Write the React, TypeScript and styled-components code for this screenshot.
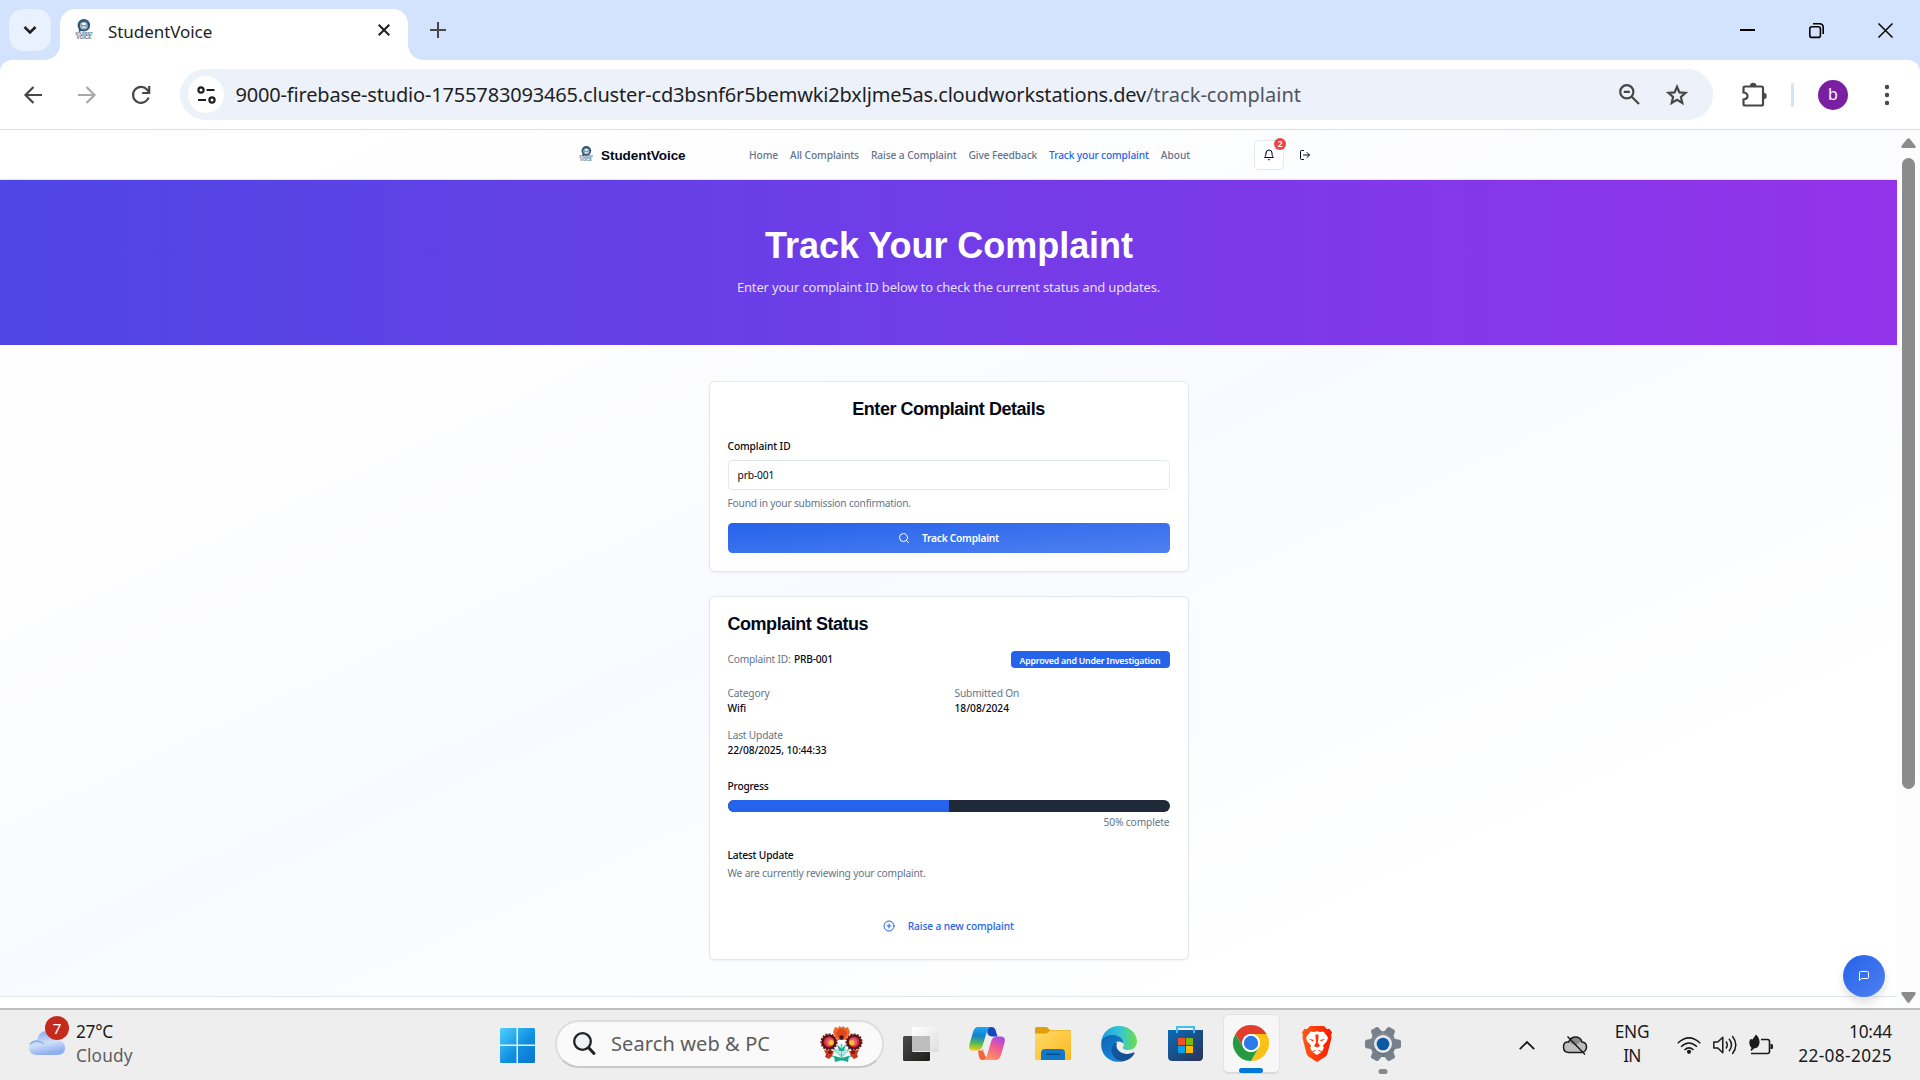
import React from 'react';
import styled, { createGlobalStyle, css } from 'styled-components';
import { LogOut, Search, CirclePlus } from 'lucide-react';

const ui = `"Noto Sans", "Open Sans", sans-serif`;
const heading = `"Liberation Sans", Arial, sans-serif`;
const c = {
  strip: '#d3e2fd', ink: '#020817', muted: '#64748b', line: '#e2e8f0',
  blue: '#2563eb', chrome: '#474747', text: '#1f1f1f',
};

const Global = createGlobalStyle`
  * { box-sizing: border-box; }
  html, body { margin: 0; padding: 0; overflow: hidden; }
  body { font-family: ${ui}; color: ${c.ink}; }
  svg { display: block; flex: none; overflow: visible; }
  p, h1, h2 { margin: 0; }
`;

const Screen = styled.div`
  width: 1920px; height: 1080px; display: flex; flex-direction: column; overflow: hidden; background: #fff;
`;
const spacing = css<{ $ls?: number }>`letter-spacing: ${p => p.$ls ?? 0}px;`;

/* ---- browser frame ---- */
const TabStrip = styled.div`
  height: 60px; flex: none; display: flex; background: ${c.strip}; padding: 9px 0 0 9px;
`;
const TabSearch = styled.div`
  width: 42px; height: 42px; border-radius: 14px; background: #e9f0fe; display: grid; place-items: center;
`;
const Tab = styled.div`
  position: relative; width: 348px; height: 51px; margin-left: 9px; padding: 0 18px 9px 15px;
  border-radius: 15px 15px 0 0; background: #fff; display: flex; align-items: center;
  &::before, &::after { content: ''; position: absolute; bottom: 0; width: 15px; height: 15px; }
  &::before { left: -15px; background: radial-gradient(circle at 0 0, transparent 14.5px, #fff 15px); }
  &::after { right: -15px; background: radial-gradient(circle at 100% 0, transparent 14.5px, #fff 15px); }
`;
const TabTitle = styled.span`
  ${spacing} font-size: 17px; line-height: 24px; color: ${c.text}; padding: 3px 0 0 15px; flex: 1;
`;
const NewTab = styled.div`width: 18px; height: 42px; margin-left: 21px; display: grid; place-items: center;`;
const WindowButtons = styled.div`
  margin-left: auto; display: grid; grid-template-columns: repeat(3, 69px); height: 42px; place-items: center;
`;
const ToolbarBack = styled.div`background: ${c.strip}; flex: none;`;
const Toolbar = styled.div`
  height: 70px; display: flex; align-items: center; background: #fff; border-radius: 12px 12px 0 0;
  border-bottom: 1px solid #dedede; padding: 0 6px;
`;
const ToolCell = styled.div<{ $w?: number; $ml?: number }>`
  width: ${p => p.$w ?? 54}px; margin-left: ${p => p.$ml ?? 0}px; height: 50px; display: grid; place-items: center; flex: none;
`;
const Omnibox = styled.div`
  width: 1533px; height: 51px; margin-left: 12px; border-radius: 26px; background: #ecf1fa;
  display: flex; align-items: center; padding: 0 12px 0 8px;
`;
const SiteInfo = styled.div`
  width: 36px; height: 37px; border-radius: 19px; background: #fff; display: grid; place-items: center;
`;
const Url = styled.div`
  flex: 1; margin-left: 11.500px; font-size: 20px; line-height: 30px; white-space: nowrap; color: ${c.text};
`;
const Host = styled.span`${spacing}`;
const Path = styled.span`${spacing} color: #51545a;`;
const Divider = styled.div`width: 3px; height: 24px; border-radius: 2px; margin-left: 10px; background: ${c.strip};`;
const Avatar = styled.div`
  width: 30px; height: 30px; border-radius: 50%; margin-left: 24px; background: #7b1fa2; color: #fff;
  font-size: 16px; line-height: 29px; text-align: center;
`;

/* ---- web page ---- */
const Viewport = styled.div`height: 878px; flex: none; display: flex;`;
const Page = styled.div`
  width: 1897px; display: flex; flex-direction: column;
  background: linear-gradient(to bottom right, #fff 0%, #fefeff 25%, #f8faff 48%, #fff 82%);
`;
const Header = styled.header`
  height: 50px; flex: none; border-bottom: 1px solid ${c.line}; display: flex; align-items: center; padding-left: 579px;
  background: rgba(255, 255, 255, 0.4);
`;
const Brand = styled.span`
  ${spacing} font: bold 13.5px/20px ${heading}; width: 148px; padding: 2px 0 0 8px; flex: none;
`;
const Nav = styled.nav`display: flex; gap: 12px; margin-left: 8px; padding-top: 2px; width: 505px; flex: none; white-space: nowrap;`;
const NavLink = styled.a<{ $active?: boolean; $ls?: number }>`
  ${spacing} font-size: 10.2px; font-weight: 500; line-height: 15px; color: ${p => (p.$active ? c.blue : c.muted)};
`;
const BellButton = styled.div`
  position: relative; width: 30px; height: 30px; border: 1px solid ${c.line}; border-radius: 4.5px;
  background: #fff; display: grid; place-items: center; flex: none;
`;
const Count = styled.span`
  position: absolute; top: -3px; right: -3px; width: 12px; height: 12px; border-radius: 50%;
  background: #ef4444; color: #fff; font-size: 9px; font-weight: 600; line-height: 12px; text-align: center;
`;
const LogoutButton = styled.div`width: 42px; height: 30px; display: grid; place-items: center;`;

const Hero = styled.section`
  height: 165px; flex: none; padding-top: 43px; text-align: center; color: #fff;
  background: linear-gradient(to right, #4f46e5, #9333ea);
`;
const HeroTitle = styled.h1`${spacing} font: bold 36px/45px ${heading}; padding-left: 1px;`;
const HeroText = styled.p`${spacing} margin-top: 9px; font-size: 13px; line-height: 21px; color: rgba(255, 255, 255, 0.85);`;

const Main = styled.main`display: flex; flex-direction: column; gap: 24px; align-items: center; padding: 36px 0; flex: none;`;
const Card = styled.section`
  width: 480px; border: 1px solid ${c.line}; border-radius: 6px; background: #fff; padding: 15px 18px 18px;
  box-shadow: 0 1px 2px rgba(0, 0, 0, 0.05); display: flex; flex-direction: column;
`;
const CardTitle = styled.h2<{ $center?: boolean; $ls?: number }>`
  ${spacing} font: bold 18px/24px ${heading}; text-align: ${p => (p.$center ? 'center' : 'left')};
`;
const Line = styled.p<{ $muted?: boolean; $mt?: number; $right?: boolean; $ls?: number }>`
  ${spacing} font-size: 10.2px; line-height: 15px; margin-top: ${p => p.$mt ?? 0}px;
  font-weight: ${p => (p.$muted ? 400 : 500)}; color: ${p => (p.$muted ? c.muted : c.ink)};
  text-align: ${p => (p.$right ? 'right' : 'left')};
`;
const Input = styled.div`
  ${spacing} height: 30px; margin-top: 6px; border: 1px solid ${c.line}; border-radius: 4.5px; padding: 0 9px;
  font-size: 10.2px; line-height: 29px;
`;
const Submit = styled.div`
  ${spacing} height: 30px; margin-top: 12px; border-radius: 4.5px; display: flex; align-items: center; justify-content: center;
  gap: 12px; color: #fff; font-size: 10.2px; font-weight: 600; background: linear-gradient(to bottom right, ${c.blue}, #4f80f0);
`;
const IdRow = styled.div`display: flex; justify-content: space-between; align-items: center; height: 17px; margin-top: 15px;`;
const IdValue = styled.span`${spacing} color: ${c.ink}; font-weight: 500; margin-left: 1px;`;
const Badge = styled.span`
  ${spacing} width: 159px; height: 17px; border-radius: 4px; background: ${c.blue}; color: #fff; font-size: 8.75px; font-weight: 600;
  line-height: 20px; text-align: center; white-space: nowrap;
`;
const Facts = styled.div`display: grid; grid-template-columns: 1fr 1fr; gap: 12px; margin: 18px 0 21px;`;
const ProgressTrack = styled.div`height: 12px; margin: 6px 0 3px; border-radius: 6px; overflow: hidden; background: #1f2937;`;
const ProgressFill = styled.div`width: 50%; height: 100%; background: ${c.blue};`;
const LinkButton = styled.div`
  ${spacing} height: 30px; margin-top: 30px; display: flex; align-items: center; justify-content: center; gap: 12.5px;
  color: ${c.blue}; font-size: 10.2px; font-weight: 500;
`;
const Footer = styled.footer`border-top: 1px solid ${c.line}; flex: 1; background: #fff;`;
const ChatButton = styled.div`
  position: absolute; left: 1843px; top: 955px; width: 42px; height: 42px; border-radius: 50%; display: grid; place-items: center;
  background: linear-gradient(to bottom right, ${c.blue}, #4f80f0); box-shadow: 0 6px 10px rgba(0, 0, 0, 0.12);
`;
const ScrollBar = styled.div`
  width: 23px; background: #fcfcfc; display: flex; flex-direction: column; align-items: center; padding: 8px 0 5px;
`;
const Thumb = styled.div`width: 13px; height: 631px; margin-top: 10px; border-radius: 7px; background: #8b8b8b;`;
const Grow = styled.div`flex: 1;`;

/* ---- task bar ---- */
const Taskbar = styled.div`
  flex: 1; border-top: 2px solid #bfbfbf; background: #eeeeee; display: flex; align-items: center; color: #1b1b1b;
`;
const Weather = styled.div`width: 500px; display: flex; padding-left: 29px; gap: 11px; flex: none;`;
const WeatherIcon = styled.div`position: relative; width: 36px; height: 46px; display: flex; align-items: center;`;
const Alert = styled.span`
  position: absolute; left: 16px; top: -4px; width: 24px; height: 24px; border-radius: 50%; background: #c42b1c; color: #fff;
  font-size: 15px; line-height: 24px; text-align: center;
`;
const Stack = styled.div<{ $align?: string }>`
  display: flex; flex-direction: column; align-items: ${p => p.$align ?? 'flex-start'}; padding-bottom: 2px;
`;
const SysText = styled.span<{ $dim?: boolean; $ls?: number }>`
  ${spacing} font-size: 17.3px; line-height: 24px; color: ${p => (p.$dim ? '#5f5f5f' : '#1b1b1b')};
`;
const SearchBox = styled.div`
  width: 329px; height: 48px; margin: -3px 4px 0 20px; border: 2px solid #dedede; border-bottom-color: #c8c8c8; border-radius: 24px;
  background: #fafafa; display: flex; align-items: center; padding: 0 19px 0 16px; flex: none;
`;
const SearchText = styled.span`${spacing} font-size: 20px; line-height: 28px; color: #5d5d5d; padding: 1px 0 0 16px; flex: 1;`;
const AppSlot = styled.div`width: 66px; height: 70px; display: grid; place-items: center; flex: none;`;
const AppTile = styled.div<{ $active?: boolean }>`
  position: relative; width: 57px; height: 60px; border-radius: 6px; display: grid; place-items: center; margin-top: -3px;
  ${p => p.$active && css`background: #f7f7f7; border: 1px solid #e3e3e3; border-bottom: 2px solid #dadada;`}
`;
const Running = styled.span<{ $wide?: boolean }>`
  position: absolute; bottom: ${p => (p.$wide ? -1 : 0)}px; left: 50%; transform: translateX(-50%); height: 5px; border-radius: 3px;
  width: ${p => (p.$wide ? 24 : 9)}px; background: ${p => (p.$wide ? '#0078d7' : '#8a8a8a')};
`;
const Tray = styled.div`flex: 1; margin-left: 87px; display: flex; align-items: center;`;
const TrayCell = styled.div<{ $w: number; $ml?: number }>`
  width: ${p => p.$w}px; margin-left: ${p => p.$ml ?? 0}px; display: grid; place-items: center; flex: none;
`;
const Clock = styled.div`flex: 1; padding: 0 28px 2px 0; display: flex; flex-direction: column; align-items: flex-end;`;

const Emblem = styled.div<{ $s: number }>`
  width: ${p => p.$s * 18}px; height: ${p => p.$s * 22}px; display: flex; flex-direction: column; align-items: center; color: #2f5673; flex: none;
`;
const EmblemWord = styled.span<{ $s: number }>`
  font: bold ${p => p.$s * 5}px/${p => p.$s * 4.4}px ${heading}; opacity: 0.85;
`;
const Logo = ({ s }: { s: number }) => (
  <Emblem $s={s}>
    <svg width={13.5 * s} height={13.5 * s} viewBox="0 0 13 13">
      <circle cx="6.6" cy="6" r="6" fill="#2f5673" />
      <path d="M2 9 L1.6 12.6 L6 11z" fill="#2f5673" />
      <circle cx="6.6" cy="6.4" r="3.7" fill="#b7c9d6" />
      <path d="M2.6 4.8 L6.6 3 L10.6 4.8 L6.6 6.6z M4.4 6.2v2.1c1.4 1.1 3 1.1 4.4 0V6.2L6.6 7.2z" fill="#fff" stroke="#2f5673" strokeWidth=".5" />
    </svg>
    <EmblemWord $s={s * 0.74}>STUDENT</EmblemWord>
    <EmblemWord $s={s * 0.95}>VOICE</EmblemWord>
  </Emblem>
);

const BellIcon = () => (
  <svg width="12" height="12" viewBox="0 0 24 24" fill="none" stroke={c.ink} strokeWidth="2" strokeLinecap="round" strokeLinejoin="round">
    <path d="M6 8a6 6 0 0 1 12 0c0 7 3 9 3 9H3s3-2 3-9" /><path d="M10.300 21a1.940 1.940 0 0 0 3.400 0" />
  </svg>
);
const MessageIcon = () => (
  <svg width="12" height="12" viewBox="0 0 24 24" fill="none" stroke="#fff" strokeWidth="2" strokeLinecap="round" strokeLinejoin="round">
    <path d="M21 15a2 2 0 0 1-2 2H7l-4 4V5a2 2 0 0 1 2-2h14a2 2 0 0 1 2 2z" />
  </svg>
);

const Flower = () => (
  <svg width="43" height="38" viewBox="0 0 43 38">
    <path d="M21.5 36V19M21 31L12 22M22 31L31 22M21 34L9 30M22 34L34 30" stroke="#5cc9b4" strokeWidth="1.6" fill="none" />
    {[9, 34].map(x => (
      <g key={x}>
        <circle cx={x} cy="17" r="7.6" fill="#4a1218" stroke="#6b1a1d" strokeWidth="2" strokeDasharray="2 1.2" />
        <circle cx={x} cy="17" r="5.4" fill="#d3302b" />
        <circle cx={x + (x < 20 ? 1 : -1)} cy="17" r="4" fill="#e8508a" />
        <circle cx={x + (x < 20 ? 2 : -2)} cy="17.5" r="2.6" fill="#ffc220" />
      </g>
    ))}
    <path d="M13 7 15 2l3 1 1.500-2 2 1.500L23.500 1l1.500 2 3-1 2 5-2 5-3 3h-7l-3-3z" fill="#f0692a" />
    <path d="M16 8l2-3 3.500-1.500L25 5l2 3-2 4h-7z" fill="#dd4a17" />
    <circle cx="21.500" cy="12.500" r="2.200" fill="#4a1218" />
    <path d="M4 25l10 1-2 5-3 3-4-2 1-3zM39 25l-10 1 2 5 3 3 4-2-1-3z" fill="#c8371a" />
    <circle cx="10" cy="27" r="2" fill="#7a1a15" /><circle cx="33" cy="27" r="2" fill="#7a1a15" />
    <path d="M17 19l4.500 5 4.500-5-2 7h-5zM14 31l7.500 2 7.500-2-1 6-6.500-2-6.500 2z" fill="#18a88f" />
    <path d="M14 27l4-4 3 8zM29 27l-4-4-3 8z" fill="#a5e4d8" />
  </svg>
);

const Windows = () => (
  <svg width="35" height="35" viewBox="0 0 35 35">
    <defs><linearGradient id="win" x1="0" y1="0" x2="1" y2="1"><stop offset="0" stopColor="#4fd0ff" /><stop offset=".55" stopColor="#1290e2" /><stop offset="1" stopColor="#0873cf" /></linearGradient></defs>
    <path d="M1.500 0H16.500V16.500H0V1.500Q0 0 1.500 0zM18 0H33.500Q35 0 35 1.500V16.500H18zM0 18H16.500V35H1.500Q0 35 0 33.500zM18 18H35V33.500Q35 35 33.500 35H18z" fill="url(#win)" />
  </svg>
);
const TaskView = () => (
  <svg width="36" height="34" viewBox="0 0 36 34">
    <defs>
      <linearGradient id="tv1" x1="0" y1="0" x2="1" y2="1"><stop stopColor="#4b4a48" /><stop offset="1" stopColor="#1d1d1c" /></linearGradient>
      <linearGradient id="tv2" x1="0" y1="0" x2="1" y2="1"><stop stopColor="#fff" /><stop offset="1" stopColor="#dedede" /></linearGradient>
    </defs>
    <rect y="9" width="27" height="25" rx="1.500" fill="url(#tv1)" />
    <rect x="9" width="27" height="25" rx="1.500" fill="url(#tv2)" />
    <path d="M9 9h18v15H9z" fill="#bdbdbd" />
  </svg>
);
const Copilot = () => (
  <svg width="36" height="33" viewBox="0 0 36 33">
    <defs>
      <linearGradient id="cp1" x1=".3" y1="0" x2=".2" y2="1"><stop stopColor="#1ba7ef" /><stop offset=".35" stopColor="#167fd2" /><stop offset=".65" stopColor="#4cb35d" /><stop offset="1" stopColor="#f3d311" /></linearGradient>
      <linearGradient id="cp2" x1=".8" y1="0" x2=".3" y2="1"><stop stopColor="#a24be8" /><stop offset=".45" stopColor="#ef5a94" /><stop offset="1" stopColor="#ff9a5c" /></linearGradient>
      <linearGradient id="cp3" x1="0" y1="0" x2="1" y2="1"><stop stopColor="#0c4fae" /><stop offset="1" stopColor="#1c3fd0" /></linearGradient>
    </defs>
    <path d="M18 0h4.500q3 0 4 3l2 6.500h-5q-4 0-5-3z" fill="url(#cp3)" />
    <path d="M9 23.500h6l-2-2 5 11.500h-4.500q-2.500 0-3.500-3z" fill="#f4653a" />
    <path d="M9 0H21.500Q19 1 17.800 5L13.500 19Q12 23.500 8 23.500H4Q-1 23.500 .4 17.500L4 5Q5.500 0 9 0z" fill="url(#cp1)" />
    <path d="M27 33H14Q16.800 32 18 28L22.300 14Q23.700 9.500 27.800 9.500H32Q37 9.500 35.600 15.500L32 28Q30.500 33 27 33z" fill="url(#cp2)" />
  </svg>
);
const Folder = () => (
  <svg width="36" height="33" viewBox="0 0 36 33">
    <defs><linearGradient id="fo" x1="0" y1="0" x2="1" y2="1"><stop stopColor="#ffda6b" /><stop offset="1" stopColor="#fcb91c" /></linearGradient></defs>
    <path d="M0 1.500Q0 0 1.500 0H11q1 0 2 1l2 2h19.500q1.500 0 1.500 1.500V10H0z" fill="#dfa00c" />
    <path d="M0 6.500h11q1 0 2-1l2-2h19.500Q36 3.500 36 5V31.500Q36 33 34.500 33H1.500Q0 33 0 31.500z" fill="url(#fo)" />
    <path d="M6 33v-7q0-4 4-4h16q4 0 4 4v7z" fill="#1377c9" /><path d="M11 27.300h14" stroke="#0a4d8b" strokeWidth="1.600" />
  </svg>
);
const Edge = () => (
  <svg width="36" height="36" viewBox="0 0 36 36">
    <defs>
      <linearGradient id="ed1" x1="0" y1=".5" x2="1" y2=".5"><stop stopColor="#1c9de0" /><stop offset=".5" stopColor="#35c3d8" /><stop offset="1" stopColor="#6be04b" /></linearGradient>
      <linearGradient id="ed2" x1="0" y1="0" x2=".6" y2="1"><stop stopColor="#0f62b0" /><stop offset="1" stopColor="#1689dc" /></linearGradient>
      <linearGradient id="ed3" x1="0" y1="0" x2="1" y2="1"><stop stopColor="#0f5baa" /><stop offset="1" stopColor="#134b8c" /></linearGradient>
    </defs>
    <path d="M.3 16C1 7 8 0 18 0c11 0 18 8 18 15.500 0 5-4 8.500-9 8.500-4 0-6-1.500-5-3 1-1.300 1.200-3 .5-4.500C20.500 11 6 7 .3 16z" fill="url(#ed1)" />
    <path d="M.3 16C1.500 11 7 8.500 12.500 9c6 .5 10 4 10 9-2-3-7-4-10 1s0 14 8 16.500C9 37.500-1 29 .3 16z" fill="url(#ed2)" />
    <path d="M13 17c-5 5-3 16 7.500 18.500C27 35 31.500 31 33.500 27.500c.4-.8-.3-1.200-1-.9-8 3.400-17-.1-17-7 0-1 .2-2 .7-3z" fill="url(#ed3)" />
  </svg>
);
const Store = () => (
  <svg width="35" height="35" viewBox="0 0 35 35">
    <defs><linearGradient id="st" x1="0" y1="0" x2="1" y2="1"><stop stopColor="#0b6cb8" /><stop offset="1" stopColor="#2b3157" /></linearGradient></defs>
    <path d="M9 6V1h17v5" fill="none" stroke="#42bdf0" strokeWidth="2" />
    <path d="M0 4h35v26.500Q35 35 30.500 35h-26Q0 35 0 30.500z" fill="url(#st)" />
    <path d="M9 4v3M26 4v3" stroke="#42bdf0" strokeWidth="2" />
    <path d="M10 12h7v7h-7z" fill="#f25022" /><path d="M18 12h7v7h-7z" fill="#7fba00" />
    <path d="M10 20h7v7h-7z" fill="#00a4ef" /><path d="M18 20h7v7h-7z" fill="#ffb900" />
  </svg>
);
const Chrome = () => (
  <svg width="36" height="36" viewBox="0 0 36 36">
    <path d="M2.410 9A18 18 0 0 1 33.590 9H18A9 9 0 0 0 10.200 13.500L10.200 22.500z" fill="#e33b2e" />
    <path d="M33.590 9A18 18 0 0 1 18 36L25.800 22.500A9 9 0 0 0 18 9z" fill="#fbc116" />
    <path d="M2.410 9L10.200 22.500A9 9 0 0 0 25.800 22.500L18 36A18 18 0 0 1 2.410 9z" fill="#249a41" />
    <circle cx="18" cy="18" r="9" fill="#fff" /><circle cx="18" cy="18" r="7.200" fill="#2a7bea" />
  </svg>
);
const Brave = () => (
  <svg width="30" height="36" viewBox="0 0 30 36">
    <defs><linearGradient id="br" x1="0" y1="0" x2="1" y2="0"><stop stopColor="#ff5a14" /><stop offset="1" stopColor="#f81b00" /></linearGradient></defs>
    <path d="M8 0h14l3 3.200 2.500-.4L30 6.500l-1 3 .6 2-4.100 16q-.6 2-2.300 3.200L15 36l-8.200-5.300Q5.100 29.500 4.500 27.500L.4 11.500l.6-2-1-3 2.500-3.700 2.500.4z" fill="url(#br)" />
    <path d="M8.500 5.500l3.500.6 3-.8 3 .8 3.500-.6 4.500 6-1 3.500-4 4.500 .8 2.500-1.800 3.500-3.300-1.500L15 25.500l-1.700-1.500L10 25.500 8.200 22 9 19.500 5 15l-1-3.500z" fill="#fff" />
    <path d="M6.500 12.800l5.500 1.200-1.200 1.600zM23.500 12.800L18 14l1.200 1.600zM13.300 9l.8 7.500-2.100 3.500L15 21.500l3-1.500-2.100-3.500.8-7.500L15 8.300z" fill="#fb3a0a" />
    <path d="M10.800 26.200L15 24l4.200 2.200L15 29z" fill="#fff" />
  </svg>
);
const Gear = () => (
  <svg width="36" height="34" viewBox="0 0 36 34">
    <defs><linearGradient id="ge" x1="0" y1="0" x2="0" y2="1"><stop stopColor="#8c9299" /><stop offset="1" stopColor="#636f7b" /></linearGradient></defs>
    <circle cx="18" cy="17" r="13" fill="url(#ge)" />
    {[30, 90, 150, 210, 270, 330].map(a => (
      <path key={a} transform={`rotate(${a} 18 17)`} fill="#77818b" d="M12.500 7l1.200-6.500Q14-.8 15.500-1h5q1.500.2 1.800 1.500L23.500 7z" />
    ))}
    <circle cx="18" cy="17" r="9" fill="#e6e8ea" /><circle cx="18" cy="17" r="6.300" fill="#0c59a4" />
  </svg>
);

const stroke = { fill: 'none', stroke: c.chrome, strokeWidth: 2.2 };

export default function App() {
  return (
    <Screen>
      <Global />
      <TabStrip>
        <TabSearch><svg width="14" height="8" viewBox="0 0 14 8"><path d="M1.500 1L7 6.500 12.500 1" fill="none" stroke="#1f1f1f" strokeWidth="2.500" /></svg></TabSearch>
        <Tab>
          <Logo s={1} />
          <TabTitle $ls={-0.06}>StudentVoice</TabTitle>
          <svg width="12" height="12" viewBox="0 0 12 12"><path d="M.7.7l10.600 10.600M11.300.7L.7 11.300" stroke="#1f1f1f" strokeWidth="2" /></svg>
        </Tab>
        <NewTab><svg width="16" height="16" viewBox="0 0 16 16"><path d="M8 0v16M0 8h16" stroke={c.chrome} strokeWidth="2" /></svg></NewTab>
        <WindowButtons>
          <svg width="15" height="2" viewBox="0 0 15 2"><path d="M0 0h15v2H0z" fill="#000" /></svg>
          <svg width="15" height="15" viewBox="0 0 15 15"><rect x=".8" y="3.800" width="10.600" height="10.600" rx="2" fill="none" stroke="#000" strokeWidth="1.600" /><path d="M4 .8h6.500Q14.200.8 14.200 4.500V11" fill="none" stroke="#000" strokeWidth="1.600" /></svg>
          <svg width="15" height="15" viewBox="0 0 15 15"><path d="M.5.5l14 14M14.500.5l-14 14" stroke="#000" strokeWidth="1.500" /></svg>
        </WindowButtons>
      </TabStrip>

      <ToolbarBack>
        <Toolbar>
          <ToolCell><svg width="18" height="18" viewBox="0 0 18 18"><path d="M18 9H2M9.500 1L1.500 9l8 8" {...stroke} /></svg></ToolCell>
          <ToolCell><svg width="18" height="18" viewBox="0 0 18 18"><path d="M0 9h16M8.500 1l8 8-8 8" {...stroke} stroke="#a9a9a9" /></svg></ToolCell>
          <ToolCell><svg width="20" height="20" viewBox="0 0 20 20"><path d="M17.600 12.500A8 8 0 1 1 16 4.500L18 7" {...stroke} /><path d="M18.200 1v7h-7" {...stroke} /></svg></ToolCell>
          <Omnibox>
            <SiteInfo>
              <svg width="19" height="18" viewBox="0 0 19 18"><g fill="none" stroke="#1f1f1f" strokeWidth="2.200"><circle cx="4" cy="4" r="2.600" /><path d="M9.500 4H17.500M1 14h8" /><circle cx="15" cy="14" r="2.600" /></g></svg>
            </SiteInfo>
            <Url>
              <Host $ls={-0.17}>9000-firebase-studio-1755783093465.cluster-cd3bsnf6r5bemwki2bxljme5as.cloudworkstations.dev</Host>
              <Path $ls={0.05}>/track-complaint</Path>
            </Url>
            <ToolCell $w={48}><svg width="21" height="21" viewBox="0 0 21 21"><circle cx="7.800" cy="7.800" r="6.600" {...stroke} /><path d="M12.500 12.500l7.500 7.500M4.800 7.800h6" {...stroke} /></svg></ToolCell>
            <ToolCell $w={48}><svg width="22" height="21" viewBox="0 0 22 21"><path d="M11 2.800l2.400 5.600 6.100.5-4.600 4 1.400 6L11 15.700 5.700 18.900l1.400-6-4.600-4 6.100-.5z" {...stroke} /></svg></ToolCell>
          </Omnibox>
          <ToolCell $ml={14}>
            <svg width="24" height="24" viewBox="0 0 24 24"><path d="M3 3.500h16.500q1.500 0 1.500 1.500V21q0 1.500-1.500 1.500H3Q1.500 22.500 1.500 21v-4.500q4-.5 4-3.500t-4-3.500V5Q1.500 3.500 3 3.500z" {...stroke} /><path d="M8 3a3.200 3.200 0 0 1 6.400 0zM21.500 9.800a3 3 0 0 1 0 6.400z" fill={c.chrome} /></svg>
          </ToolCell>
          <Divider />
          <Avatar>b</Avatar>
          <ToolCell $ml={12}><svg width="4" height="20" viewBox="0 0 4 20"><g fill={c.chrome}><circle cx="2" cy="2" r="2.200" /><circle cx="2" cy="10" r="2.200" /><circle cx="2" cy="18" r="2.200" /></g></svg></ToolCell>
        </Toolbar>
      </ToolbarBack>

      <Viewport>
        <Page>
          <Header>
            <Logo s={0.78} />
            <Brand $ls={-0.06}>StudentVoice</Brand>
            <Nav>
              <NavLink $ls={-0.08}>Home</NavLink>
              <NavLink $ls={-0.08}>All Complaints</NavLink>
              <NavLink $ls={-0.1}>Raise a Complaint</NavLink>
              <NavLink $ls={-0.13}>Give Feedback</NavLink>
              <NavLink $ls={-0.13} $active>Track your complaint</NavLink>
              <NavLink>About</NavLink>
            </Nav>
            <BellButton><BellIcon /><Count>2</Count></BellButton>
            <LogoutButton><LogOut size={12} color={c.ink} /></LogoutButton>
          </Header>
          <Hero>
            <HeroTitle $ls={-0.04}>Track Your Complaint</HeroTitle>
            <HeroText $ls={-0.168}>Enter your complaint ID below to check the current status and updates.</HeroText>
          </Hero>
          <Main>
            <Card>
              <CardTitle $center $ls={-0.46}>Enter Complaint Details</CardTitle>
              <Line $mt={18} $ls={-0.08}>Complaint ID</Line>
              <Input $ls={-0.1}>prb-001</Input>
              <Line $muted $mt={6} $ls={-0.19}>Found in your submission confirmation.</Line>
              <Submit $ls={-0.24}><Search size={12} />Track Complaint</Submit>
            </Card>
            <Card>
              <CardTitle $ls={-0.46}>Complaint Status</CardTitle>
              <IdRow>
                <Line $muted $ls={-0.2}>Complaint ID: <IdValue $ls={-0.18}>PRB-001</IdValue></Line>
                <Badge $ls={-0.2}>Approved and Under Investigation</Badge>
              </IdRow>
              <Facts>
                <div><Line $muted $ls={-0.18}>Category</Line><Line>Wifi</Line></div>
                <div><Line $muted $ls={-0.16}>Submitted On</Line><Line>18/08/2024</Line></div>
                <div><Line $muted $ls={-0.19}>Last Update</Line><Line $ls={-0.065}>22/08/2025, 10:44:33</Line></div>
              </Facts>
              <Line $ls={-0.22}>Progress</Line>
              <ProgressTrack><ProgressFill /></ProgressTrack>
              <Line $muted $right $ls={-0.125}>50% complete</Line>
              <Line $mt={18} $ls={-0.17}>Latest Update</Line>
              <Line $muted $mt={3} $ls={-0.165}>We are currently reviewing your complaint.</Line>
              <LinkButton $ls={-0.13}><CirclePlus size={12} />Raise a new complaint</LinkButton>
            </Card>
          </Main>
          <Footer />
        </Page>
        <ScrollBar>
          <svg width="15" height="10" viewBox="0 0 15 10"><path d="M6.300.8Q7.500-.5 8.700.8L14.600 8Q15.300 10 13.500 10H1.500Q-.3 10 .4 8z" fill="#8b8b8b" /></svg>
          <Thumb />
          <Grow />
          <svg width="15" height="11" viewBox="0 0 15 11"><path d="M6.300 10.200Q7.500 11.500 8.700 10.200L14.600 2Q15.300 0 13.500 0H1.500Q-.3 0 .4 2z" fill="#8b8b8b" /></svg>
        </ScrollBar>
      </Viewport>
      <ChatButton><MessageIcon /></ChatButton>

      <Taskbar>
        <Weather>
          <WeatherIcon>
            <svg width="36" height="24" viewBox="0 0 36 24">
              <defs><linearGradient id="cl" x1="0" y1="0" x2=".3" y2="1"><stop stopColor="#7ea6ec" /><stop offset=".6" stopColor="#cfdff8" /><stop offset="1" stopColor="#8fb0ef" /></linearGradient></defs>
              <path d="M8 9Q10 0 18 0q8 0 10.500 9Q36 10 36 17t-7 7H8q-8 0-8-7.500T8 9z" fill="url(#cl)" />
              <path d="M1 13q6-6 14 0" fill="none" stroke="#7f9fe6" strokeWidth="1.500" opacity=".7" />
            </svg>
            <Alert>7</Alert>
          </WeatherIcon>
          <Stack><SysText $ls={-0.3}>27°C</SysText><SysText $dim $ls={0.1}>Cloudy</SysText></Stack>
        </Weather>
        <Windows />
        <SearchBox>
          <svg width="22" height="23" viewBox="0 0 22 23"><circle cx="9.500" cy="9.500" r="8.300" fill="#eef2f5" stroke="#222" strokeWidth="2.300" /><path d="M15.500 15.500l5.500 6" stroke="#222" strokeWidth="3" strokeLinecap="round" /></svg>
          <SearchText $ls={0.1}>Search web &amp; PC</SearchText>
          <Flower />
        </SearchBox>
        {[TaskView, Copilot, Folder, Edge, Store].map((Icon, i) => <AppSlot key={i}><AppTile><Icon /></AppTile></AppSlot>)}
        <AppSlot><AppTile $active><Chrome /><Running $wide /></AppTile></AppSlot>
        <AppSlot><AppTile><Brave /></AppTile></AppSlot>
        <AppSlot><AppTile><Gear /><Running /></AppTile></AppSlot>
        <Tray>
          <TrayCell $w={48}><svg width="16" height="9" viewBox="0 0 16 9"><path d="M.8 8.200L8 1l7.200 7.200" fill="none" stroke="#1b1b1b" strokeWidth="1.800" /></svg></TrayCell>
          <TrayCell $w={48}>
            <svg width="24" height="19" viewBox="0 0 24 19">
              <path d="M5.500 6Q8 1 12.500 1q5 0 6.500 5 4.500.5 4.500 5T18.500 16H6q-5.500 0-5.500-5T5.500 6z" fill="#bfbfbf" />
              <path d="M5.500 6Q8 1 12.500 1q5 0 6.500 5-4 0-6 4z" fill="#8a8a8a" />
              <path d="M5.500 6Q8 1 12.500 1q5 0 6.500 5 4.500.5 4.500 5T18.500 16.500H6q-5.500 0-5.500-5.500T5.500 6zM4.500.5l17.500 18" fill="none" stroke="#1b1b1b" strokeWidth="1.500" />
            </svg>
          </TrayCell>
          <TrayCell $w={66}><Stack $align="center"><SysText $ls={-0.2}>ENG</SysText><SysText $ls={-0.8}>IN</SysText></Stack></TrayCell>
          <TrayCell $w={36} $ml={6}>
            <svg width="24" height="17" viewBox="0 0 24 17"><g fill="none" stroke="#1b1b1b" strokeWidth="1.500"><path d="M.7 6.200Q12-4.500 23.300 6.200M4 9.800q8-7.500 16 0M7.500 13q4.500-4.300 9 0" /></g><circle cx="12" cy="14.800" r="2.100" fill="#1b1b1b" /></svg>
          </TrayCell>
          <TrayCell $w={36}>
            <svg width="24" height="20" viewBox="0 0 24 20"><g fill="none" stroke="#1b1b1b" strokeWidth="1.500"><path d="M.8 7v6h4l5 4.800V2.200L4.800 7z" strokeLinejoin="round" /><path d="M13 6.500q2.500 3.500 0 7M16 3.800q5 6.200 0 12.400M19.300 1q7 9 0 18" /></g></svg>
          </TrayCell>
          <TrayCell $w={36}>
            <svg width="24" height="20" viewBox="0 0 24 20"><path d="M12 4.500h6.500q2 0 2 2v10q0 2-2 2H2" fill="none" stroke="#1b1b1b" strokeWidth="1.600" /><path d="M21.500 9h1.200q1.300 0 1.300 1.500v2q0 1.500-1.300 1.500h-1.200z" fill="#1b1b1b" /><path d="M7 -.5Q11.500 4 10.300 9 9.500 13 5 13.500L2.500 16 1.500 15 2.500 13Q-1.500 8 1.500 4L3.500 4.500z" fill="#1b1b1b" /></svg>
          </TrayCell>
          <Clock><SysText $ls={-0.25}>10:44</SysText><SysText $ls={0.36}>22-08-2025</SysText></Clock>
        </Tray>
      </Taskbar>
    </Screen>
  );
}
